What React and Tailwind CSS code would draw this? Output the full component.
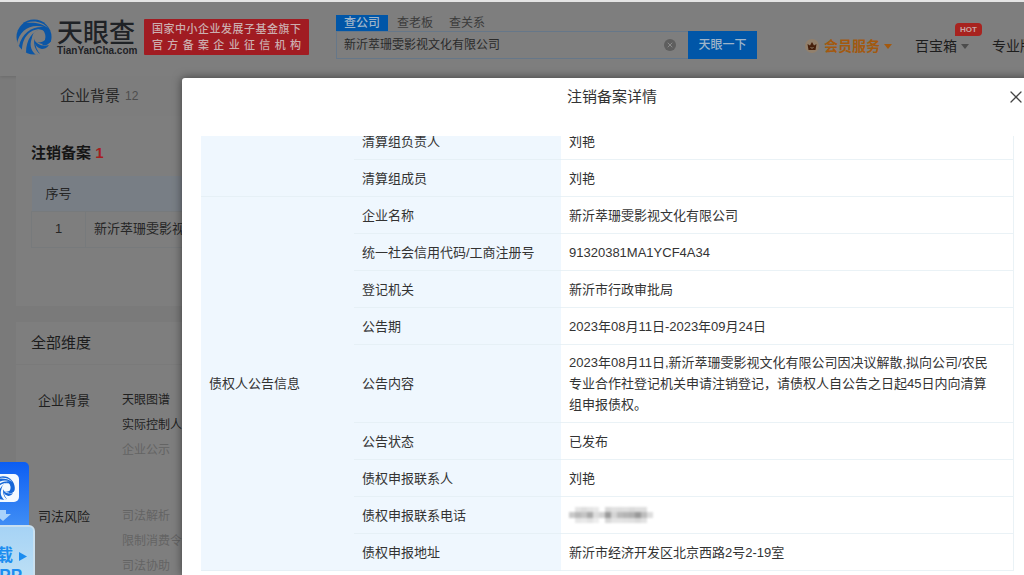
import React from 'react';
import { X } from 'lucide-react';

const creditorRows = [
  { label: '企业名称', value: '新沂萃珊雯影视文化有限公司' },
  { label: '统一社会信用代码/工商注册号', value: '91320381MA1YCF4A34' },
  { label: '登记机关', value: '新沂市行政审批局' },
  { label: '公告期', value: '2023年08月11日-2023年09月24日' },
  {
    label: '公告内容',
    value:
      '2023年08月11日,新沂萃珊雯影视文化有限公司因决议解散,拟向公司/农民专业合作社登记机关申请注销登记，请债权人自公告之日起45日内向清算组申报债权。',
  },
  { label: '公告状态', value: '已发布' },
  { label: '债权申报联系人', value: '刘艳' },
  { label: '债权申报联系电话', value: <MaskedPhone /> },
  { label: '债权申报地址', value: '新沂市经济开发区北京西路2号2-19室' },
];

const dimensions = [
  {
    title: '企业背景',
    links: [
      { text: '天眼图谱', active: true },
      { text: '实际控制人', active: true },
      { text: '企业公示', active: false },
    ],
  },
  {
    title: '司法风险',
    links: [
      { text: '司法解析', active: false },
      { text: '限制消费令', active: false },
      { text: '司法协助', active: false },
    ],
  },
];

function Swirl({ className, blade, gap }) {
  return (
    <svg viewBox="0 0 36 36" className={className} aria-hidden="true">
      <circle cx="18" cy="18" r="17.5" fill={blade} />
      {/* open lower right side */}
      <path d="M19 21C19 27 21 32 25 36H36V22C31 26 23 26 19 21Z" fill={gap} />
      {/* hollow eye */}
      <path d="M16 20C16 13 21 10 26 11C30 12 31 16 29 21C26 24 20 25 16 20Z" fill={gap} />
      {/* slits between the blades */}
      <path d="M1 25C3 11 15 4 28 8C16 7 6 14 3 27Z" fill={gap} />
      <path d="M6 32C6 19 13 10 25 10C17 12 10 20 10 34Z" fill={gap} />
      <path d="M20 36C14 31 13 24 17 17L19 20C17 25 19 31 24 35Z" fill={gap} />
      <path d="M10 4C18 1 27 3 32 9C26 4 18 3 10 4Z" fill={gap} />
      {/* hook */}
      <path d="M24 8C32 9 36 15 35 21C34 25 30 27 26 26C30 23 32 14 24 8Z" fill={blade} />
      <path d="M18 20C20 25 26 28 33 26C31 29 28 30 26 30C21 29 18 25 18 20Z" fill={blade} />
    </svg>
  );
}

function Caret({ className }) {
  return (
    <svg viewBox="0 0 8 5" className={className} aria-hidden="true">
      <path d="M0 0H8L4 5Z" fill="currentColor" />
    </svg>
  );
}

function MaskedPhone() {
  const cells = [
    [6, 0, 6, '#e4e4e4'], [12, 0, 6, '#dedede'], [18, 0, 6, '#e4e4e4'],
    [24, 0, 6, '#e8e8e8'], [36, 0, 6, '#d8d8d8'], [42, 0, 6, '#e0e0e0'], [48, 0, 6, '#dedede'],
    [54, 0, 6, '#e0e0e0'], [60, 0, 6, '#dadada'], [66, 0, 6, '#dedede'], [72, 0, 6, '#dedede'],
    [0, 5, 6, '#c9c9c9'], [6, 5, 6, '#b9b9b9'], [12, 5, 6, '#c4c4c4'], [18, 5, 6, '#a9a9a9'],
    [24, 5, 6, '#dcdcdc'], [30, 5, 6, '#d2d2d2'], [36, 5, 6, '#9c9c9c'], [42, 5, 6, '#d4d4d4'],
    [48, 5, 6, '#bababa'], [54, 5, 6, '#b4b4b4'], [60, 5, 6, '#b0b0b0'], [66, 5, 6, '#999999'],
    [72, 5, 6, '#bcbcbc'], [78, 5, 6, '#dddddd'], [6, 11, 5, '#e6e6e6'], [12, 11, 5, '#e9e9e9'],
    [18, 11, 5, '#e2e2e2'], [24, 11, 5, '#ededed'], [36, 11, 5, '#d6d6d6'], [42, 11, 5, '#e4e4e4'],
    [48, 11, 5, '#e4e4e4'], [54, 11, 5, '#e2e2e2'], [60, 11, 5, '#e0e0e0'], [66, 11, 5, '#d9d9d9'],
    [72, 11, 5, '#e2e2e2'],
  ];
  return (
    <svg viewBox="0 0 84 16" className="h-4 w-[84px] blur-[1px]" role="img" aria-label="已隐藏">
      {cells.map(([x, y, h, fill]) => (
        <rect key={`${x}-${y}`} x={x} y={y} width="6" height={h} fill={fill} />
      ))}
    </svg>
  );
}

function Header() {
  return (
    <header className="flex h-[74px] items-start bg-[#7e7e7e] pl-4 shadow-[0_1px_3px_rgba(0,0,0,0.12)]">
      <a href="#home" className="mt-4 flex shrink-0 items-center gap-[5px]">
        <Swirl className="size-9" blade="#0b56a6" gap="#7e7e7e" />
        <span className="flex w-[78px] flex-col pt-[2px] text-[#1f2226]">
          <span className="text-[26px] font-medium leading-[26px]">天眼查</span>
          <span className="font-['Liberation_Sans',sans-serif] text-[10px] font-bold leading-[10px]">TianYanCha.com</span>
        </span>
      </a>

      <div className="ml-[9px] mt-[17px] w-[165px] shrink-0 rounded-[1px] bg-[#a11c22] px-2 py-[2px] text-[11px] font-medium leading-[16px] text-[#ccaeaf]">
        <p className="[text-align-last:justify]">国家中小企业发展子基金旗下</p>
        <p className="[text-align-last:justify]">官方备案企业征信机构</p>
      </div>

      <form className="ml-[27px] mt-[13px] w-[421px] shrink-0" onSubmit={(e) => e.preventDefault()}>
        <div className="flex h-4 items-center text-[12px] leading-[16px] text-[#3b3b3b]">
          <button type="button" className="h-4 w-[52px] bg-[#0056a8] font-medium text-[#9fb4c9]">查公司</button>
          <button type="button" className="ml-[9px]">查老板</button>
          <button type="button" className="ml-4">查关系</button>
        </div>
        <div className="flex h-7">
          <div className="flex min-w-0 flex-1 items-center border border-r-0 border-[#667789] pl-[7px] pr-3">
            <input
              type="text"
              aria-label="搜索公司"
              defaultValue="新沂萃珊雯影视文化有限公司"
              className="min-w-0 flex-1 bg-transparent text-[12px] text-[#2a2a2a] outline-none"
            />
            <button type="button" aria-label="清空" className="flex size-3 items-center justify-center rounded-full bg-[#5e5e5e] text-[#8a8a8a]">
              <X className="size-2" strokeWidth={3} />
            </button>
          </div>
          <button type="submit" className="w-[69px] bg-[#0056a8] text-[12px] font-medium text-[#9fb4c9]">天眼一下</button>
        </div>
      </form>

      <nav className="ml-12 mt-[34px] flex shrink-0 items-center whitespace-nowrap text-[14px] leading-[20px] text-[#1d1d1d]">
        <a href="#vip" className="flex items-center font-bold text-[#a3590f]">
          <svg viewBox="0 0 14 14" className="mr-[5px] size-[14px]" aria-hidden="true">
            <circle cx="7" cy="7" r="7" fill="#92806c" />
            <path d="M2.5 5L5 6.5L7 3L9 6.5L11.5 5L10.5 11H3.5Z" fill="#46200c" />
            <path d="M5.5 8L7 9.5L8.500 8" stroke="#92806c" fill="none" />
          </svg>
          会员服务
          <Caret className="ml-1 h-[5px] w-2" />
        </a>
        <a href="#toolbox" className="relative ml-[23px] flex items-center">
          百宝箱
          <Caret className="ml-1 h-[5px] w-2 text-[#4c4c4c]" />
          <span className="absolute -top-[13px] left-10 rounded-t-[4px] rounded-br-[4px] bg-[#a8231f] px-[5px] font-['Liberation_Sans',sans-serif] text-[8px] font-bold leading-[13px] text-[#c7a5a4]">
            HOT
          </span>
        </a>
        <a href="#pro" className="ml-[23px]">专业版</a>
      </nav>
    </header>
  );
}

function CompanyPage() {
  return (
    <main className="pl-4">
      <div className="flex h-10 items-center gap-[5px] bg-[#7d7d7d] pl-11 text-[15px] text-[#252525]">
        企业背景 <span className="font-['Liberation_Sans',sans-serif] text-[12px] text-[#4d4d4d]">12</span>
      </div>

      <section className="h-[190px] bg-[#7e7e7e] pl-[15px] pt-[25px]">
        <h2 className="text-[15px] font-bold leading-[24px] text-[#151515]">
          注销备案 <span className="text-[#a31f1f]">1</span>
        </h2>
        <table className="mt-[11px] w-full table-fixed border-collapse text-left text-[13px] text-[#262626]">
          <thead>
            <tr className="h-[35px] bg-[#787e85]">
              <th className="w-[54px] text-center font-normal">序号</th>
              <th aria-label="企业名称" />
            </tr>
          </thead>
          <tbody>
            <tr className="h-9">
              <td className="border border-[#777a7c] text-center">1</td>
              <td className="border border-[#777a7c] pl-2">新沂萃珊雯影视文化有限公司</td>
            </tr>
          </tbody>
        </table>
      </section>

      <section className="mt-4 bg-[#7e7e7e]">
        <h2 className="flex h-[43px] items-center border-b border-[#7a7a7a] pl-[15px] text-[15px] text-[#1c1c1c]">全部维度</h2>
        <div className="pl-[22px] pt-[23px]">
          {dimensions.map((group) => (
            <div key={group.title} className="flex h-[116px] items-start">
              <h3 className="w-[84px] text-[13px] leading-[25px] text-[#1f1f1f]">{group.title}</h3>
              <ul className="text-[12px] leading-[25px]">
                {group.links.map((link) => (
                  <li key={link.text}>
                    <a href="#dimension" className={link.active ? 'text-[#1f1f1f]' : 'text-[#646464]'}>{link.text}</a>
                  </li>
                ))}
              </ul>
            </div>
          ))}
        </div>
      </section>
    </main>
  );
}

function AppDownload() {
  return (
    <a href="#app" className="absolute -left-10 top-[460px] block w-[75px] font-bold text-[#1c8df0]">
      <span className="mr-[6px] flex h-[63px] flex-col items-end rounded-tr-[5px] bg-linear-to-b from-[#0b5df2] to-[#3f8df5] pr-[10px] pt-3">
        <span className="flex size-7 items-center justify-end rounded-[5px] bg-[#f4f9ff] pr-1">
          <Swirl className="size-6" blade="#1667d8" gap="#f4f9ff" />
        </span>
        <svg viewBox="0 0 16 12" className="mr-[8px] mt-2 h-3 w-4" aria-hidden="true">
          <path d="M5 0H11V4H16L8 11L0 4H5Z" fill="#a9d2fb" />
        </svg>
      </span>
      <span className="block h-[70px] rounded-tr-[6px] border-2 border-[#c9e0f0] bg-linear-to-b from-[#a6d3f5] to-[#c3e3f5] pt-[18px]">
        <span className="flex items-center justify-end gap-[6px] pr-[6px] text-[17px] leading-[22px]">
          下载
          <svg viewBox="0 0 8 9" className="h-[9px] w-2" aria-hidden="true">
            <path d="M0 0L8 4.500L0 9Z" fill="currentColor" />
          </svg>
        </span>
        <span className="block pr-[11px] text-right font-['Liberation_Sans',sans-serif] text-[17px] leading-[18px]">APP</span>
      </span>
    </a>
  );
}

function Row({ label, value, children }) {
  return (
    <tr className="h-[37px]">
      {children}
      <th scope="row" className="border-b border-[#e6f0f6] bg-[#eff7fe] px-2 text-left font-normal">{label}</th>
      <td className="border-b border-r border-[#eaf2f6] py-[7px] pl-2 pr-5">{value}</td>
    </tr>
  );
}

function DetailDialog() {
  return (
    <div
      role="dialog"
      aria-labelledby="dialog-title"
      className="absolute -right-[18px] bottom-0 left-[182px] top-[76px] flex flex-col rounded-tl-[3px] bg-white pb-1 text-[#333] shadow-[0_0_10px_rgba(0,0,0,0.5)]"
    >
      <div className="relative flex h-[38px] shrink-0 items-center justify-center">
        <h1 id="dialog-title" className="text-[15px]">注销备案详情</h1>
        <button type="button" aria-label="关闭" className="absolute right-4 top-[9px] flex size-5 items-center justify-center text-[#444]">
          <X className="size-5" strokeWidth={1.5} />
        </button>
      </div>
      <div className="mt-5 min-h-0 flex-1 overflow-hidden pl-[19px] pr-7">
        {/* scrolled part way into the liquidation rows */}
        <table className="-mt-[13px] w-full table-fixed border-separate border-spacing-0 text-[13px] leading-[21px]">
          <colgroup>
            <col className="w-[153px]" />
            <col className="w-[207px]" />
            <col />
          </colgroup>
          <tbody>
            <Row label="清算组负责人" value="刘艳">
              <th scope="rowgroup" rowSpan={2} className="border-b border-[#e6f0f6] bg-[#eff7fe]" aria-label="清算组信息" />
            </Row>
            <Row label="清算组成员" value="刘艳" />
            {creditorRows.map((row, i) => (
              <Row key={row.label} label={row.label} value={row.value}>
                {i === 0 && (
                  <th scope="rowgroup" rowSpan={creditorRows.length} className="border-b border-[#e6f0f6] bg-[#eff7fe] px-2 text-left font-normal">
                    债权人公告信息
                  </th>
                )}
              </Row>
            ))}
          </tbody>
        </table>
      </div>
    </div>
  );
}

export default function App() {
  return (
    <div className="relative h-screen overflow-hidden border-t-2 border-[#e4e4e4] bg-[#7a7a7a] font-['Liberation_Sans','Noto_Sans_CJK_SC',sans-serif]">
      <Header />
      <CompanyPage />
      <AppDownload />
      <DetailDialog />
    </div>
  );
}
